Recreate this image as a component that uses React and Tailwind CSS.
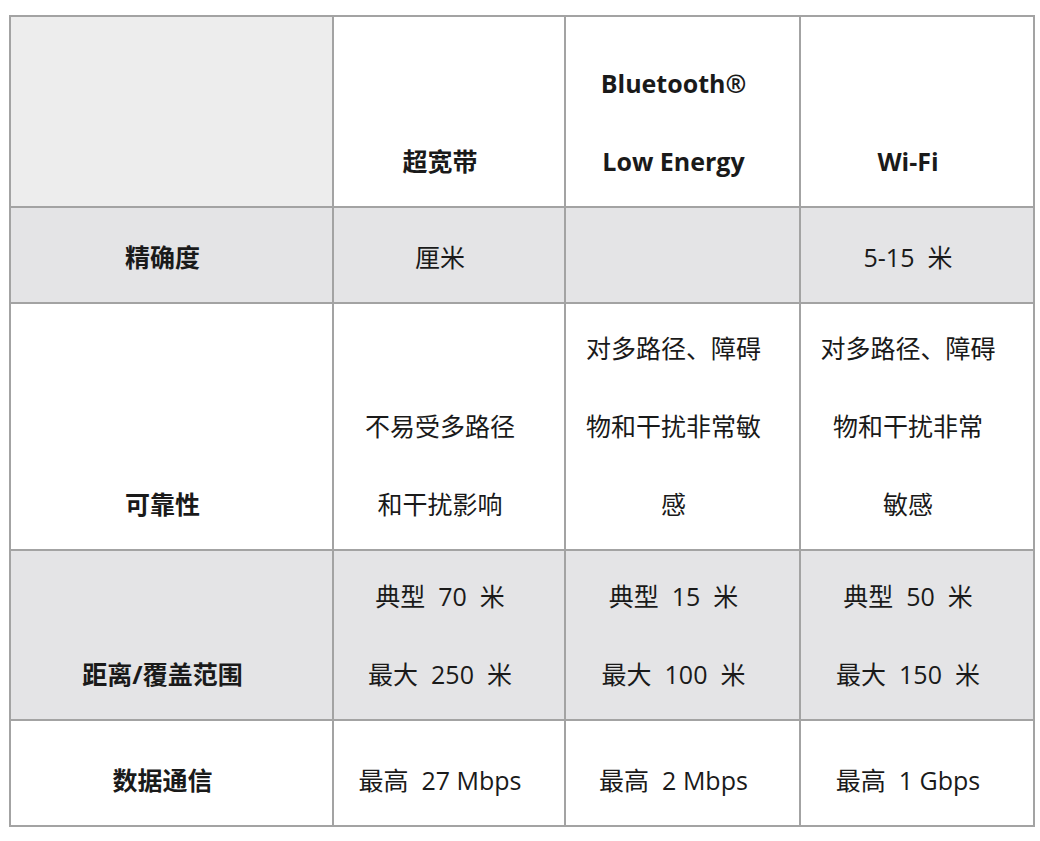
import React from "react";

const rows = [
  {
    label: "精确度",
    gray: true,
    h: "h-[96px]",
    cells: [["厘米"], [""], ["5-15\u00a0 米"]],
  },
  {
    label: "可靠性",
    gray: false,
    h: "h-[247px]",
    cells: [
      ["不易受多路径", "和干扰影响"],
      ["对多路径、障碍", "物和干扰非常敏", "感"],
      ["对多路径、障碍", "物和干扰非常", "敏感"],
    ],
  },
  {
    label: "距离/覆盖范围",
    gray: true,
    h: "h-[170px]",
    cells: [
      ["典型\u00a0 70\u00a0 米", "最大\u00a0 250\u00a0 米"],
      ["典型\u00a0 15\u00a0 米", "最大\u00a0 100\u00a0 米"],
      ["典型\u00a0 50\u00a0 米", "最大\u00a0 150\u00a0 米"],
    ],
  },
  {
    label: "数据通信",
    gray: false,
    h: "h-[106px]",
    cells: [["最高\u00a0 27 Mbps"], ["最高\u00a0 2 Mbps"], ["最高\u00a0 1 Gbps"]],
  },
];

// each text line sits in a 78px tall box, cells push content to the bottom
const Lines = ({ lines }) => (
  <div>
    {lines.map((l, i) => (
      <div key={i} className="leading-[78px] whitespace-nowrap">
        {l || "\u00a0"}
      </div>
    ))}
  </div>
);

const cellCls =
  "border-2 border-[#a3a3a3] align-bottom text-center pl-[2px] pr-[20px] pb-[6px]";

export default function App() {
  return (
    <div
      className="bg-white w-[1040px] h-[841px] pt-[15px] pl-[9px] text-[#1a1a1a] text-[25px]"
      style={{ fontFamily: '"Open Sans", "Noto Sans CJK SC", sans-serif' }}
    >
      <table className="table-fixed border-collapse w-[1024px]">
        <colgroup>
          <col className="w-[323px]" />
          <col className="w-[232px]" />
          <col className="w-[235px]" />
          <col className="w-[234px]" />
        </colgroup>
        <thead>
          <tr className="h-[191px]">
            <th className={`${cellCls} bg-[#ededed]`}></th>
            <th className={`${cellCls} bg-white font-bold`}>
              <Lines lines={["超宽带"]} />
            </th>
            <th className={`${cellCls} bg-white font-bold`}>
              <Lines lines={["Bluetooth®", "Low Energy"]} />
            </th>
            <th className={`${cellCls} bg-white font-bold`}>
              <Lines lines={["Wi-Fi"]} />
            </th>
          </tr>
        </thead>
        <tbody>
          {rows.map((r) => (
            <tr key={r.label} className={`${r.h} ${r.gray ? "bg-[#e4e4e6]" : "bg-white"}`}>
              <td className={`${cellCls} font-bold`}>
                <Lines lines={[r.label]} />
              </td>
              {r.cells.map((c, i) => (
                <td key={i} className={cellCls}>
                  <Lines lines={c} />
                </td>
              ))}
            </tr>
          ))}
        </tbody>
      </table>
    </div>
  );
}
